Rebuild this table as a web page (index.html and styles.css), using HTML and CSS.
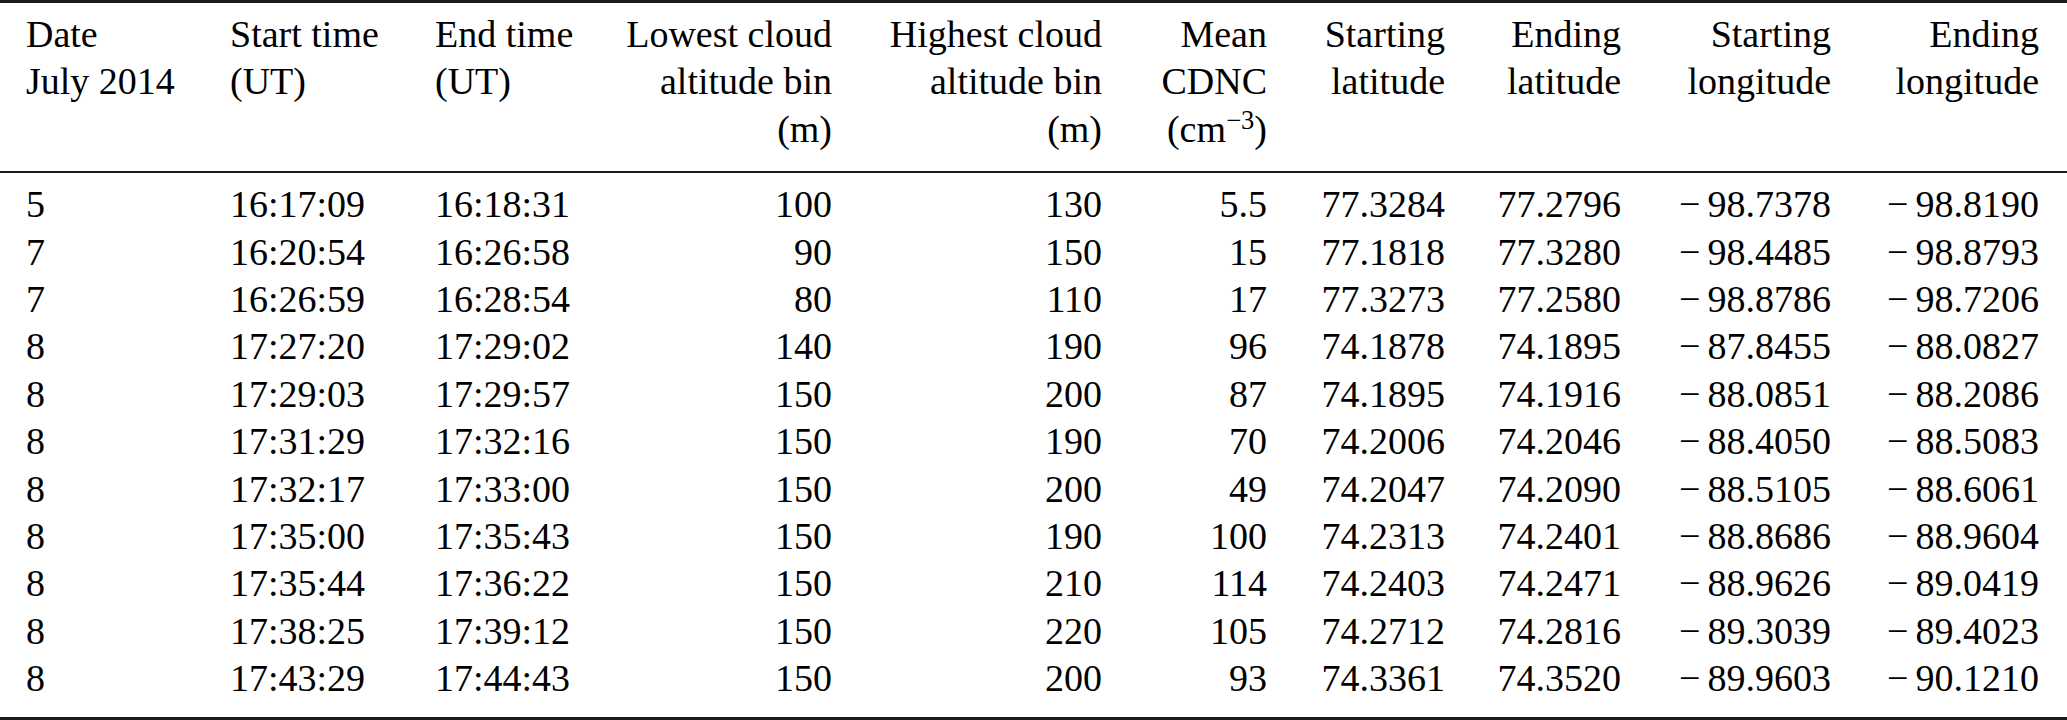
FILE: index.html
```html
<!DOCTYPE html>
<html>
<head>
    <meta charset="UTF-8">
    <title>Cloud profiles, July 2014</title>
    <link rel="stylesheet" href="styles.css">
</head>
<body>
    <table class="data-table">
        <colgroup>
            <col class="col-date">
            <col class="col-start">
            <col class="col-end">
            <col class="col-low">
            <col class="col-high">
            <col class="col-cdnc">
            <col class="col-lat1">
            <col class="col-lat2">
            <col class="col-lon1">
            <col class="col-lon2">
        </colgroup>
        <thead>
            <tr>
                <th class="first">Date<br>July 2014</th>
                <th>Start time<br>(UT)</th>
                <th>End time<br>(UT)</th>
                <th class="num">Lowest cloud<br>altitude bin<br>(m)</th>
                <th class="num">Highest cloud<br>altitude bin<br>(m)</th>
                <th class="num">Mean<br>CDNC<br>(cm<sup>&minus;3</sup>)</th>
                <th class="num">Starting<br>latitude</th>
                <th class="num">Ending<br>latitude</th>
                <th class="num">Starting<br>longitude</th>
                <th class="num last">Ending<br>longitude</th>
            </tr>
        </thead>
        <tbody>
            <tr>
                <td class="first">5</td><td>16:17:09</td><td>16:18:31</td>
                <td class="num">100</td><td class="num">130</td><td class="num">5.5</td>
                <td class="num">77.3284</td><td class="num">77.2796</td>
                <td class="num"><span class="minus">&minus;</span>98.7378</td><td class="num last"><span class="minus">&minus;</span>98.8190</td>
            </tr>
            <tr>
                <td class="first">7</td><td>16:20:54</td><td>16:26:58</td>
                <td class="num">90</td><td class="num">150</td><td class="num">15</td>
                <td class="num">77.1818</td><td class="num">77.3280</td>
                <td class="num"><span class="minus">&minus;</span>98.4485</td><td class="num last"><span class="minus">&minus;</span>98.8793</td>
            </tr>
            <tr>
                <td class="first">7</td><td>16:26:59</td><td>16:28:54</td>
                <td class="num">80</td><td class="num">110</td><td class="num">17</td>
                <td class="num">77.3273</td><td class="num">77.2580</td>
                <td class="num"><span class="minus">&minus;</span>98.8786</td><td class="num last"><span class="minus">&minus;</span>98.7206</td>
            </tr>
            <tr>
                <td class="first">8</td><td>17:27:20</td><td>17:29:02</td>
                <td class="num">140</td><td class="num">190</td><td class="num">96</td>
                <td class="num">74.1878</td><td class="num">74.1895</td>
                <td class="num"><span class="minus">&minus;</span>87.8455</td><td class="num last"><span class="minus">&minus;</span>88.0827</td>
            </tr>
            <tr>
                <td class="first">8</td><td>17:29:03</td><td>17:29:57</td>
                <td class="num">150</td><td class="num">200</td><td class="num">87</td>
                <td class="num">74.1895</td><td class="num">74.1916</td>
                <td class="num"><span class="minus">&minus;</span>88.0851</td><td class="num last"><span class="minus">&minus;</span>88.2086</td>
            </tr>
            <tr>
                <td class="first">8</td><td>17:31:29</td><td>17:32:16</td>
                <td class="num">150</td><td class="num">190</td><td class="num">70</td>
                <td class="num">74.2006</td><td class="num">74.2046</td>
                <td class="num"><span class="minus">&minus;</span>88.4050</td><td class="num last"><span class="minus">&minus;</span>88.5083</td>
            </tr>
            <tr>
                <td class="first">8</td><td>17:32:17</td><td>17:33:00</td>
                <td class="num">150</td><td class="num">200</td><td class="num">49</td>
                <td class="num">74.2047</td><td class="num">74.2090</td>
                <td class="num"><span class="minus">&minus;</span>88.5105</td><td class="num last"><span class="minus">&minus;</span>88.6061</td>
            </tr>
            <tr>
                <td class="first">8</td><td>17:35:00</td><td>17:35:43</td>
                <td class="num">150</td><td class="num">190</td><td class="num">100</td>
                <td class="num">74.2313</td><td class="num">74.2401</td>
                <td class="num"><span class="minus">&minus;</span>88.8686</td><td class="num last"><span class="minus">&minus;</span>88.9604</td>
            </tr>
            <tr>
                <td class="first">8</td><td>17:35:44</td><td>17:36:22</td>
                <td class="num">150</td><td class="num">210</td><td class="num">114</td>
                <td class="num">74.2403</td><td class="num">74.2471</td>
                <td class="num"><span class="minus">&minus;</span>88.9626</td><td class="num last"><span class="minus">&minus;</span>89.0419</td>
            </tr>
            <tr>
                <td class="first">8</td><td>17:38:25</td><td>17:39:12</td>
                <td class="num">150</td><td class="num">220</td><td class="num">105</td>
                <td class="num">74.2712</td><td class="num">74.2816</td>
                <td class="num"><span class="minus">&minus;</span>89.3039</td><td class="num last"><span class="minus">&minus;</span>89.4023</td>
            </tr>
            <tr>
                <td class="first">8</td><td>17:43:29</td><td>17:44:43</td>
                <td class="num">150</td><td class="num">200</td><td class="num">93</td>
                <td class="num">74.3361</td><td class="num">74.3520</td>
                <td class="num"><span class="minus">&minus;</span>89.9603</td><td class="num last"><span class="minus">&minus;</span>90.1210</td>
            </tr>
        </tbody>
    </table>
</body>
</html>
```

FILE: styles.css
```css
body {
    margin: 0;
    background-color: white;
    color: #000;
    font-family: "Liberation Serif";
    font-size: 38px;
}
.data-table {
    width: 2067px;
    table-layout: fixed;
    border-collapse: collapse;
    border-top: 3px solid #1a1a1a;
    border-bottom: 3px solid #1a1a1a;
    line-height: 47.4px;
}
.col-date { width: 205px; }
.col-start { width: 205px; }
.col-end { width: 190px; }
.col-low { width: 257px; }
.col-high { width: 270px; }
.col-cdnc { width: 165px; }
.col-lat1 { width: 178px; }
.col-lat2 { width: 176px; }
.col-lon1 { width: 210px; }
.col-lon2 { width: 211px; }
.data-table th,
.data-table td {
    padding: 0 25px;
    text-align: left;
    font-family: "Liberation Serif";
    font-size: 38px;
    font-weight: normal;
    white-space: nowrap;
}
.data-table th {
    vertical-align: top;
    padding-top: 8px;
    padding-bottom: 18px;
    border-bottom: 2px solid #1a1a1a;
}
.data-table tbody tr:first-child td {
    padding-top: 8px;
}
.data-table tbody tr:last-child td {
    padding-bottom: 14px;
}
.data-table .num {
    text-align: right;
}
.data-table .first {
    padding-left: 26px;
}
.data-table .last {
    padding-right: 28px;
}
.minus {
    margin-right: 7px;
}
sup {
    font-size: 70%;
    line-height: 0;
    vertical-align: 0.5em;
}
```
